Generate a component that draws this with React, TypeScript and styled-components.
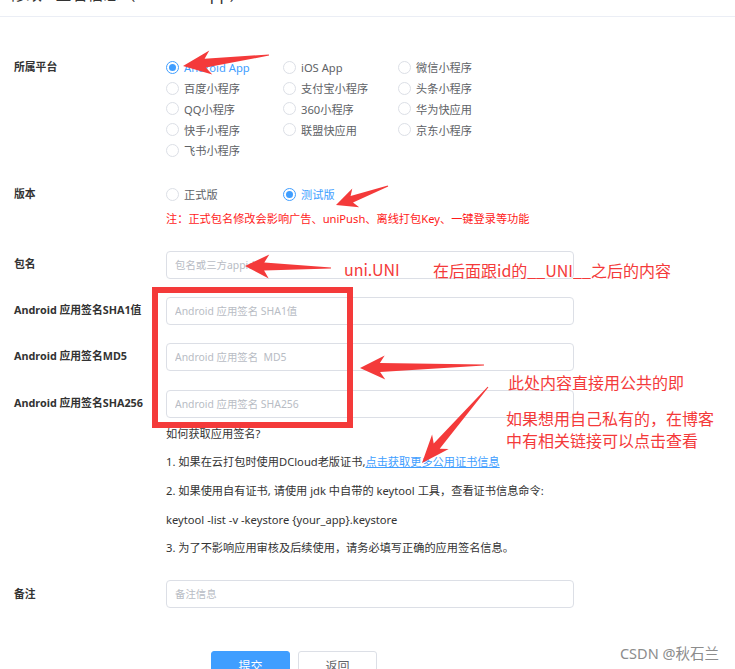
import React from 'react';
import styled, { createGlobalStyle } from 'styled-components';

const GlobalStyle = createGlobalStyle`
    html, body {
        margin: 0;
        padding: 0;
        background: #fff;
    }
    body {
        font-family: "Noto Sans", "Noto Sans CJK SC", sans-serif;
        color: #333;
    }
`;

const Page = styled.div`
    position: relative;
    width: 735px;
    height: 669px;
    overflow: hidden;
    background: #fff;
`;
const Header = styled.div`
    height: 16px;
    overflow: hidden;
    border-bottom: 1px solid #ebeef5;
    padding-left: 10px;
`;
const HeaderTitle = styled.div`
    font-size: 16px;
    line-height: 16px;
    margin-top: -14px;
    color: #333;
    white-space: nowrap;
`;
const Form = styled.div`
    display: flex;
    flex-direction: column;
    padding: 40px 0 0 14px;
`;
const Row = styled.div<{ $mb: number; $center?: boolean }>`
    display: grid;
    grid-template-columns: 152px 408px;
    align-items: ${(p) => (p.$center ? 'center' : 'start')};
    margin-bottom: ${(p) => p.$mb}px;
`;
const Label = styled.div`
    font-size: 10.8px;
    font-weight: 700;
    color: #333;
    line-height: 20.75px;
    white-space: nowrap;
`;
const RadioGrid = styled.div`
    display: grid;
    grid-template-columns: 117px 115px 1fr;
    grid-auto-rows: 20.75px;
`;
const RadioItem = styled.label<{ $checked?: boolean }>`
    display: flex;
    align-items: center;
    gap: 5px;
    font-size: 11.2px;
    color: ${(p) => (p.$checked ? '#409eff' : '#606266')};
    white-space: nowrap;
`;
const Circle = styled.span<{ $checked?: boolean }>`
    box-sizing: border-box;
    width: 13px;
    height: 13px;
    border-radius: 50%;
    border: 1px solid ${(p) => (p.$checked ? '#409eff' : '#dcdfe6')};
    display: flex;
    align-items: center;
    justify-content: center;
    flex-shrink: 0;

    &::after {
        content: '';
        width: 7px;
        height: 7px;
        border-radius: 50%;
        background: ${(p) => (p.$checked ? '#409eff' : 'transparent')};
    }
`;
const Note = styled.div`
    font-size: 11.2px;
    line-height: 20px;
    color: #ff1a1a;
    margin-top: 4px;
    white-space: nowrap;
`;
const Input = styled.input`
    box-sizing: border-box;
    width: 408px;
    height: 28px;
    border: 1px solid #dcdfe6;
    border-radius: 4px;
    padding: 0 8px;
    font-family: inherit;
    font-size: 10.4px;
    color: #606266;
    outline: none;

    &::placeholder {
        color: #b8bcc4;
    }
`;
const Help = styled.div`
    grid-column: 2;
    font-size: 11.2px;
    line-height: 28.7px;
    color: #333;
    white-space: nowrap;
`;
const HelpLink = styled.a`
    color: #409eff;
    text-decoration: underline;
`;
const Buttons = styled.div`
    display: flex;
    gap: 8px;
    padding-left: 197px;
`;
const Button = styled.button<{ $primary?: boolean }>`
    box-sizing: border-box;
    width: 79px;
    height: 30px;
    border-radius: 3px;
    font-family: inherit;
    font-size: 12px;
    border: 1px solid ${(p) => (p.$primary ? '#409eff' : '#dcdfe6')};
    background: ${(p) => (p.$primary ? '#409eff' : '#fff')};
    color: ${(p) => (p.$primary ? '#fff' : '#606266')};
`;

// annotation layer drawn on top of the screenshot
const Overlay = styled.svg`
    position: absolute;
    left: 0;
    top: 0;
    pointer-events: none;
`;
const Remark = styled.div<{ $x: number; $y: number }>`
    position: absolute;
    left: ${(p) => p.$x}px;
    top: ${(p) => p.$y}px;
    font-family: "Noto Sans CJK SC", sans-serif;
    font-size: 16px;
    line-height: 22px;
    color: #f43a3a;
    white-space: nowrap;
`;
const Watermark = styled.div`
    position: absolute;
    right: 16px;
    top: 642px;
    font-family: "Noto Sans", "Noto Sans CJK SC", sans-serif;
    font-size: 14.5px;
    color: #8c8c8c;
`;

type Pt = [number, number];

const arrowPoints = (tip: Pt, tail: Pt, headLen: number, headHalf: number, neck: number, tailW: number): string => {
    const dx = tail[0] - tip[0];
    const dy = tail[1] - tip[1];
    const len = Math.hypot(dx, dy);
    const ux = dx / len;
    const uy = dy / len;
    const px = -uy;
    const py = ux;
    const at = (d: number, w: number): Pt => [tip[0] + ux * d + px * w, tip[1] + uy * d + py * w];
    const pts: Pt[] = [
        tip,
        at(headLen, headHalf),
        at(headLen * 0.8, neck / 2),
        at(len, tailW / 2),
        at(len, -tailW / 2),
        at(headLen * 0.8, -neck / 2),
        at(headLen, -headHalf),
    ];
    return pts.map((p) => p.map((v) => v.toFixed(1)).join(',')).join(' ');
};

const arrows: { tip: Pt; tail: Pt; head: number; half: number; neck: number }[] = [
    { tip: [183, 66], tail: [269, 55], head: 28, half: 12, neck: 9 },
    { tip: [336, 205], tail: [388, 186], head: 21, half: 10, neck: 7 },
    { tip: [245, 266], tail: [331, 268], head: 24, half: 12, neck: 8 },
    { tip: [360, 368], tail: [484, 365], head: 25, half: 12, neck: 9 },
    { tip: [422, 463], tail: [488, 387], head: 28, half: 11, neck: 8 },
];

const platforms = [
    'Android App', 'iOS App', '微信小程序',
    '百度小程序', '支付宝小程序', '头条小程序',
    'QQ小程序', '360小程序', '华为快应用',
    '快手小程序', '联盟快应用', '京东小程序',
    '飞书小程序',
];

function Radio(props: { text: string; checked?: boolean }) {
    const { text, checked } = props;
    return (
        <RadioItem $checked={checked}>
            <Circle $checked={checked} />
            {text}
        </RadioItem>
    );
}

function App() {
    return (
        <Page>
            <GlobalStyle />
            <Header>
                <HeaderTitle>修改 - 签名信息（Android App）</HeaderTitle>
            </Header>
            <Form>
                <Row $mb={23}>
                    <Label>所属平台</Label>
                    <RadioGrid>
                        {platforms.map((p, i) => (
                            <Radio key={p} text={p} checked={i === 0} />
                        ))}
                    </RadioGrid>
                </Row>
                <Row $mb={22}>
                    <Label>版本</Label>
                    <div>
                        <RadioGrid>
                            <Radio text="正式版" />
                            <Radio text="测试版" checked />
                        </RadioGrid>
                        <Note>注：正式包名修改会影响广告、uniPush、离线打包Key、一键登录等功能</Note>
                    </div>
                </Row>
                <Row $mb={18} $center>
                    <Label>包名</Label>
                    <Input placeholder="包名或三方appid" />
                </Row>
                <Row $mb={18} $center>
                    <Label>Android 应用签名SHA1值</Label>
                    <Input placeholder="Android 应用签名 SHA1值" />
                </Row>
                <Row $mb={19} $center>
                    <Label>Android 应用签名MD5</Label>
                    <Input placeholder="Android 应用签名  MD5" />
                </Row>
                <Row $mb={2} $center>
                    <Label>Android 应用签名SHA256</Label>
                    <Input placeholder="Android 应用签名 SHA256" />
                </Row>
                <Row $mb={17}>
                    <Help>
                        <div>如何获取应用签名?</div>
                        <div>
                            1. 如果在云打包时使用DCloud老版证书,<HelpLink>点击获取更多公用证书信息</HelpLink>
                        </div>
                        <div>2. 如果使用自有证书, 请使用 jdk 中自带的 keytool 工具，查看证书信息命令:</div>
                        <div>keytool -list -v -keystore {'{your_app}'}.keystore</div>
                        <div>3. 为了不影响应用审核及后续使用，请务必填写正确的应用签名信息。</div>
                    </Help>
                </Row>
                <Row $mb={43} $center>
                    <Label>备注</Label>
                    <Input placeholder="备注信息" />
                </Row>
                <Buttons>
                    <Button $primary>提交</Button>
                    <Button>返回</Button>
                </Buttons>
            </Form>

            <Overlay width={735} height={669} viewBox="0 0 735 669">
                <rect x={155} y={290} width={195} height={135} fill="none" stroke="#f43a3a" strokeWidth={6} />
                {arrows.map((a, i) => (
                    <polygon key={i} points={arrowPoints(a.tip, a.tail, a.head, a.half, a.neck, 1)} fill="#f43a3a" />
                ))}
            </Overlay>
            <Remark $x={344} $y={258}>uni.UNI</Remark>
            <Remark $x={433} $y={259}>在后面跟id的__UNI__之后的内容</Remark>
            <Remark $x={508} $y={371}>此处内容直接用公共的即</Remark>
            <Remark $x={506} $y={407}>
                如果想用自己私有的，在博客
                <br />
                中有相关链接可以点击查看
            </Remark>
            <Watermark>CSDN @秋石兰</Watermark>
        </Page>
    );
}

export default App;
